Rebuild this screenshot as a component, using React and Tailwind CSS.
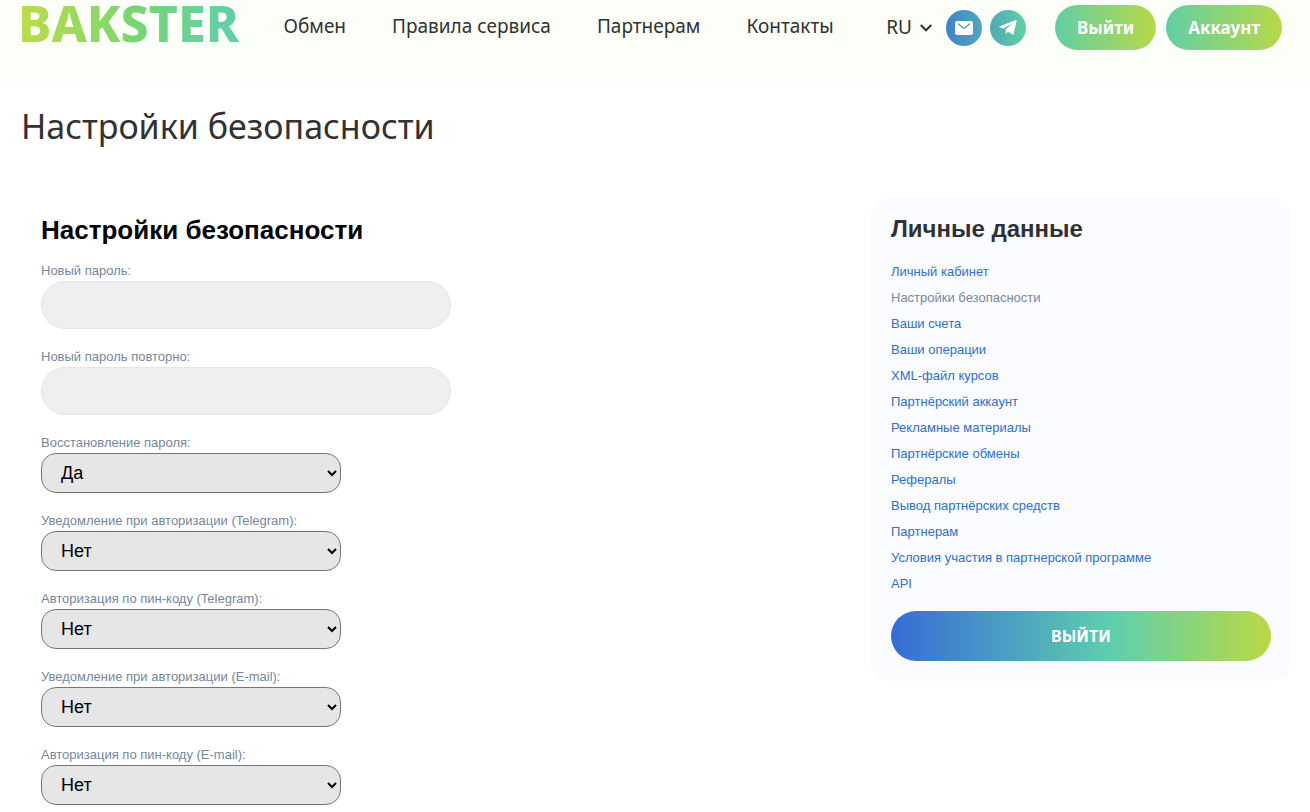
import { useState } from 'react';

const navLinks = ['Обмен', 'Правила сервиса', 'Партнерам', 'Контакты'];

const passwordFields = [
  { id: 'new-password', label: 'Новый пароль:' },
  { id: 'new-password-repeat', label: 'Новый пароль повторно:' },
];

const selectFields = [
  { id: 'password-recovery', label: 'Восстановление пароля:', value: 'Да' },
  { id: 'notify-telegram', label: 'Уведомление при авторизации (Telegram):', value: 'Нет' },
  { id: 'pin-telegram', label: 'Авторизация по пин-коду (Telegram):', value: 'Нет' },
  { id: 'notify-email', label: 'Уведомление при авторизации (E-mail):', value: 'Нет' },
  { id: 'pin-email', label: 'Авторизация по пин-коду (E-mail):', value: 'Нет' },
];

const accountLinks = [
  'Личный кабинет',
  'Настройки безопасности',
  'Ваши счета',
  'Ваши операции',
  'XML-файл курсов',
  'Партнёрский аккаунт',
  'Рекламные материалы',
  'Партнёрские обмены',
  'Рефералы',
  'Вывод партнёрских средств',
  'Партнерам',
  'Условия участия в партнерской программе',
  'API',
];

function MailIcon() {
  return (
    <svg width="18" height="14" viewBox="0 0 18 14" aria-hidden="true">
      <rect width="18" height="14" rx="2" fill="#fff" />
      <path d="M3.2 2.8 9 7.4l5.8-4.6" fill="none" stroke="#4595c2" strokeWidth="1.2" />
    </svg>
  );
}

function TelegramIcon() {
  return (
    <svg width="18" height="15" viewBox="0 0 18 15" aria-hidden="true">
      <path
        d="M17 .1.6 6.3c-.6.3-.6.8 0 1l3.9 1.2L13.8 3 6.700 9.200v4.900l2.400-2.500 4.300 3c.6.3 1 .1 1.200-.6L17.600.9c.1-.7-.1-1-.6-.8Z"
        fill="#fff"
      />
    </svg>
  );
}

function Header() {
  return (
    <header className="bg-[#fcfff8] h-[85px] pl-[18px] pr-7 flex items-start justify-between font-['Noto_Sans',sans-serif] text-[#323232]">
      <a
        href="#home"
        className="leading-[46px] text-[50px] font-extrabold bg-linear-to-r/srgb from-[#bfdc45] via-[#7bd66f] to-[#5ecfae] bg-clip-text text-transparent"
      >
        BAKSTER
      </a>

      <nav className="pt-1 pr-2 h-12 flex items-center gap-[46px] text-[19px]">
        {navLinks.map((link) => (
          <a key={link} href="#nav">
            {link}
          </a>
        ))}
      </nav>

      <div className="pt-[5px] flex items-center">
        <button type="button" className="flex items-center gap-2 text-[19px]">
          RU
          <svg width="12" height="8" viewBox="0 0 12 8" fill="none" stroke="#323232" strokeWidth="2" aria-hidden="true">
            <path d="m.7 1 5.300 5.300L11.300 1" />
          </svg>
        </button>
        <div className="flex gap-2 ml-[14px] mr-[29px]">
          <a
            href="#mail"
            aria-label="E-mail"
            className="size-9 rounded-full flex items-center justify-center bg-linear-to-r/srgb from-[#3d83c9] to-[#4fa8ba]"
          >
            <MailIcon />
          </a>
          <a
            href="#telegram"
            aria-label="Telegram"
            className="size-9 rounded-full flex items-center justify-center bg-linear-to-r/srgb from-[#4fa9b8] to-[#64d09f]"
          >
            <TelegramIcon />
          </a>
        </div>
        <div className="flex gap-[10px] text-[17px] font-bold text-white">
          <button type="button" className="h-[45px] px-[22px] rounded-full bg-linear-to-r/srgb from-[#62cfa5] to-[#b7d947]">
            Выйти
          </button>
          <button type="button" className="h-[45px] px-[22px] rounded-full bg-linear-to-r/srgb from-[#62cfa5] to-[#b7d947]">
            Аккаунт
          </button>
        </div>
      </div>
    </header>
  );
}

function SecurityForm() {
  const [values, setValues] = useState(() => Object.fromEntries(selectFields.map((f) => [f.id, f.value])));

  return (
    <form className="flex-1 p-5 flex flex-col gap-5">
      <h2 className="text-[26px] leading-[26px] font-bold text-black">Настройки безопасности</h2>

      {passwordFields.map((field) => (
        <div key={field.id} className="flex flex-col">
          <label htmlFor={field.id} className="pb-0.5 text-[13px] leading-4 text-[#75879d]">
            {field.label}
          </label>
          <input
            id={field.id}
            type="password"
            className="h-12 w-full max-w-[410px] px-5 rounded-full border border-[#e2e5ee] bg-[#efefef]"
          />
        </div>
      ))}

      {selectFields.map((field) => (
        <div key={field.id} className="flex flex-col">
          <label htmlFor={field.id} className="pb-0.5 text-[13px] leading-4 text-[#75879d]">
            {field.label}
          </label>
          <select
            id={field.id}
            value={values[field.id]}
            onChange={(e) => setValues({ ...values, [field.id]: e.target.value })}
            className="h-10 w-full max-w-[300px] pl-[15px] rounded-[15px] border border-[#767676] bg-[#e6e6e6] text-lg text-black"
          >
            <option>Да</option>
            <option>Нет</option>
          </select>
        </div>
      ))}
    </form>
  );
}

function AccountPanel() {
  return (
    <aside className="w-[420px] p-5 rounded-[20px] bg-[#fbfcff]">
      <h2 className="text-2xl leading-6 font-bold text-[#2f3136]">Личные данные</h2>
      <ul className="mt-[18px] text-[13px] leading-[26px]">
        {accountLinks.map((link) => (
          <li key={link}>
            <a href="#account" className={link === 'Настройки безопасности' ? 'text-[#75879d]' : 'text-[#2f6fd0]'}>
              {link}
            </a>
          </li>
        ))}
      </ul>
      <button
        type="button"
        className="mt-[14px] h-[50px] w-full rounded-full bg-linear-to-r/srgb from-[#366bd6] via-[#5ecfae] via-58% to-[#bad944] font-['Noto_Sans',sans-serif] text-base font-bold text-white uppercase"
      >
        Выйти
      </button>
    </aside>
  );
}

export default function App() {
  return (
    <div className="bg-white font-['Liberation_Sans',Arial,sans-serif]">
      <Header />
      <main className="pl-[21px] pr-[19px]">
        <h1 className="pt-5 text-[34px] leading-[42px] mb-[50px] font-['Noto_Sans',sans-serif] text-[#323232]">
          Настройки безопасности
        </h1>
        <div className="flex items-start">
          <SecurityForm />
          <AccountPanel />
        </div>
      </main>
    </div>
  );
}
